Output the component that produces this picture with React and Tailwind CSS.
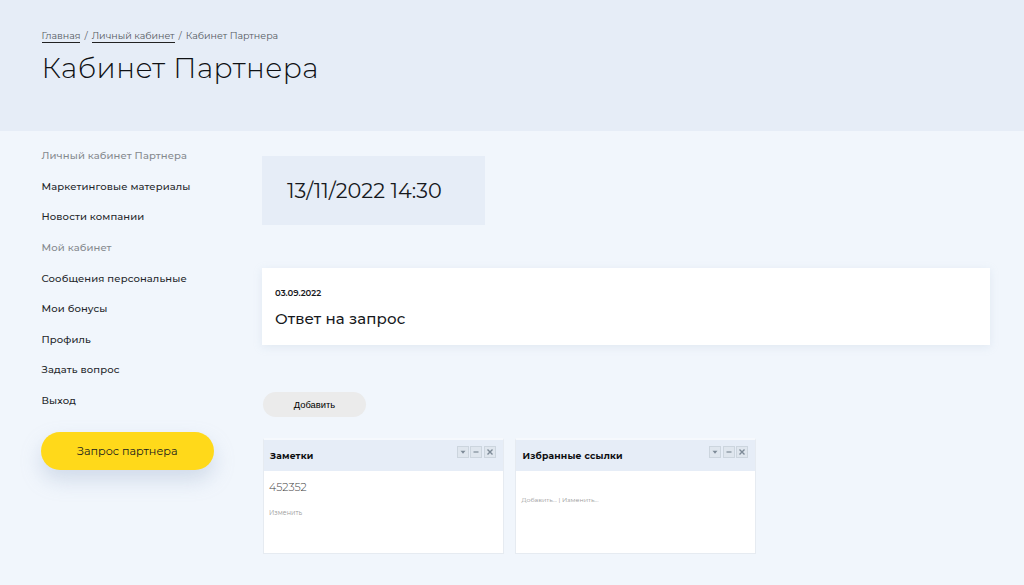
const font = "font-['Montserrat','Inter','Noto_Sans',sans-serif]";

function Nav({ children, muted }) {
  return (
    <div className={`h-[30.55px] leading-[30px] text-[10px] tracking-[0.12px] font-medium ${muted ? 'text-[#85898e]' : 'text-[#24262a]'}`}>
      {children}
    </div>
  );
}

function Ctl({ children }) {
  return (
    <span className="w-[12px] h-[12px] bg-[#dfe6ee] border border-[#ccd5de] text-[#7d8a97] flex items-center justify-center">
      <svg width="8" height="8" viewBox="0 0 8 8">{children}</svg>
    </span>
  );
}

function Widget({ title, children }) {
  return (
    <div className="w-[241px] h-[116px] bg-white border border-[#e6ebf1] border-t-2 border-t-[#f6f9fd] flex flex-col">
      <div className="h-[31px] bg-[#e6edf7] flex justify-between pl-[6.5px] pr-[7px]">
        <div className="text-[9.2px] font-bold text-[#0c0d10] leading-[31px] tracking-[0.2px]">{title}</div>
        <div className="flex gap-[1.5px] pt-[6px]">
          <Ctl><path d="M1.5 2.8 L6.5 2.8 L4 5.8 Z" fill="currentColor" /></Ctl>
          <Ctl><path d="M1.5 4 H6.5" stroke="currentColor" strokeWidth="1.2" /></Ctl>
          <Ctl><path d="M1.5 1.5 L6.5 6.5 M6.5 1.5 L1.5 6.5" stroke="currentColor" strokeWidth="1.4" /></Ctl>
        </div>
      </div>
      {children}
    </div>
  );
}

export default function App() {
  return (
    <div className={`w-[1024px] h-[585px] overflow-hidden bg-[#f1f6fc] ${font}`}>
      <header className="h-[131px] bg-[#e6edf7] pl-[41.5px] pt-[29px]">
        <div className="flex gap-[4px] text-[9.5px] leading-[13px] text-[#55595f]">
          <span className="border-b border-[#222]">Главная</span>
          <span>/</span>
          <span className="border-b border-[#222]">Личный кабинет</span>
          <span>/</span>
          <span>Кабинет Партнера</span>
        </div>
        <h1 className="text-[28px] leading-[34px] mt-[8px] font-light text-[#0f1114] tracking-[0.5px]">Кабинет Партнера</h1>
      </header>
      <div className="flex">
        <aside className="w-[221px] pl-[41.5px] pt-[10.4px] shrink-0">
          <Nav muted>Личный кабинет Партнера</Nav>
          <Nav>Маркетинговые материалы</Nav>
          <Nav>Новости компании</Nav>
          <Nav muted>Мой кабинет</Nav>
          <Nav>Сообщения персональные</Nav>
          <Nav>Мои бонусы</Nav>
          <Nav>Профиль</Nav>
          <Nav>Задать вопрос</Nav>
          <Nav>Выход</Nav>
          <button className="mt-[15.5px] block -ml-[0.5px] w-[172.5px] h-[38.5px] rounded-full bg-[#ffd91a] text-[11.2px] text-[#17191d] shadow-[0_10px_20px_rgba(150,170,200,0.35)]">
            Запрос партнера
          </button>
        </aside>
        <main className="flex-1 pl-[41px] pr-[34px] pt-[25px]">
          <div className="w-[223px] h-[69px] bg-[#e6edf7] flex items-center pl-[25px] text-[20.8px] text-[#17191d]">13/11/2022 14:30</div>
          <div className="mt-[43px] w-[728px] h-[77px] bg-white shadow-[0_2px_8px_rgba(180,195,215,0.25)] pl-[13px] pt-[19px]">
            <div className="text-[8.5px] font-semibold leading-[12px] text-[#17191d]">03.09.2022</div>
            <div className="text-[15px] font-medium tracking-[0.13px] leading-[20px] mt-[10px] text-[#17191d]">Ответ на запрос</div>
          </div>
          <button className="mt-[47px] ml-[1px] block w-[103px] h-[25px] pt-[1px] rounded-full bg-[#ebebeb] text-[9.4px] text-black font-['Liberation_Sans',sans-serif]">
            Добавить
          </button>
          <div className="mt-[21px] ml-[0.5px] flex gap-[11.5px]">
            <Widget title="Заметки">
              <div className="pl-[5.5px] pt-[9px] text-[11px] font-light leading-[14px] text-[#444]">452352</div>
              <div className="pl-[5.5px] pt-[15px] text-[6.4px] leading-[9px] text-[#999]">Изменить</div>
            </Widget>
            <Widget title="Избранные ссылки">
              <div className="pl-[5.5px] pt-[25px] text-[6.3px] leading-[9px] text-[#999]">Добавить... | Изменить...</div>
            </Widget>
          </div>
        </main>
      </div>
    </div>
  );
}
